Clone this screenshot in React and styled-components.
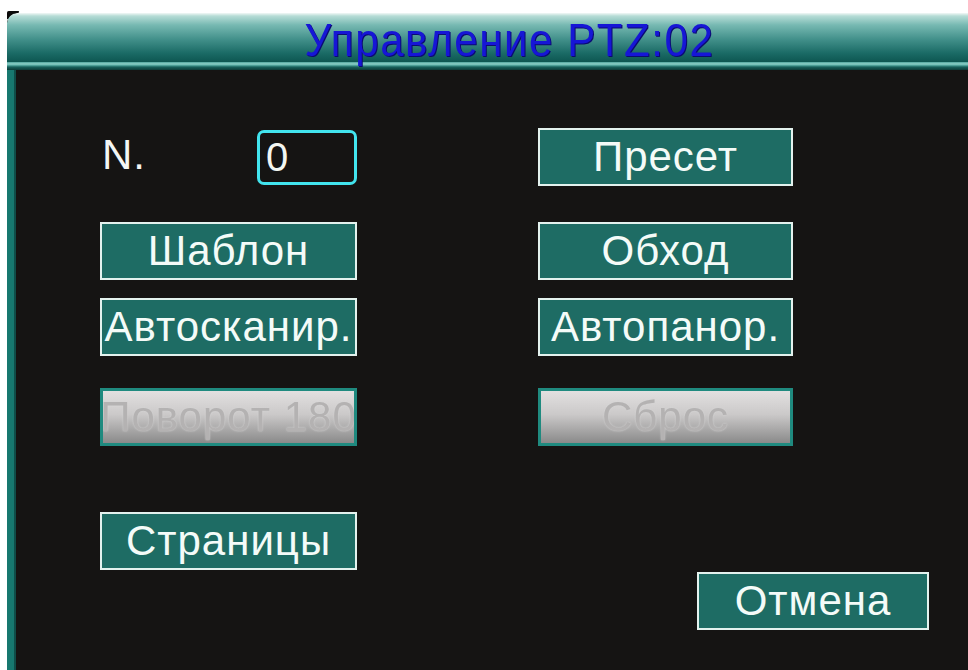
import React from 'react';
import styled, { createGlobalStyle } from 'styled-components';

const GlobalStyle = createGlobalStyle`
  html, body {
    margin: 0;
    background: #ffffff;
    font-family: "Liberation Sans", Arial, sans-serif;
  }
`;

// white page, window sits a little in from the corner
const Screen = styled.div`
  position: relative;
  padding: 13px 0 0 7px;
  height: 670px;
  box-sizing: border-box;
  overflow: hidden;
`;

// dark nick behind the rounded top-left corner
const CornerTip = styled.div`
  position: absolute;
  left: 7px;
  top: 11px;
  width: 12px;
  height: 8px;
  background: #0c0a0a;
  border-radius: 2px 0 10px 0;
`;

const Window = styled.div`
  position: relative;
  display: flex;
  flex-direction: column;
  height: 657px;
  background: #151413;
  border-top-left-radius: 10px;
  overflow: hidden;
`;

// teal glass title bar
const TitleBar = styled.div`
  height: 49px;
  display: flex;
  align-items: center;
  justify-content: center;
  background: linear-gradient(
    to bottom,
    #f2f8f6 0px,
    #b6dcd6 3px,
    #77b9b2 12px,
    #43918b 26px,
    #1b6b66 40px,
    #0d5651 49px
  );
  border-top-left-radius: 10px;
`;

const Title = styled.h1`
  margin: 6px 0 0 44px;
  font-size: 42px;
  font-weight: normal;
  letter-spacing: 1.6px;
  color: #1616d6;
  text-shadow: 1px 1px 0 #0b0b70;
  transform: scaleY(1.08);
`;

const TitleRule = styled.div`
  height: 8px;
  background: linear-gradient(
    to bottom,
    #4fa49d 0px,
    #8fd0c8 2px,
    #5fb4ab 3px,
    #17615c 5px,
    #0c3a37 8px
  );
`;

const Body = styled.div`
  flex: 1;
  display: flex;
  flex-direction: column;
  padding: 58px 39px 0 86px;
  border-left: 7px solid #17786f;
  box-shadow: inset 2px 0 0 #0f4e49;
  background: #151413;
`;

const Row = styled.div`
  display: flex;
  gap: 181px;
  margin-top: ${p => p.$gap || 0}px;
  justify-content: ${p => (p.$end ? 'flex-end' : 'flex-start')};
`;

const Cell = styled.div`
  width: ${p => p.$w || 257}px;
  display: flex;
  align-items: center;
  justify-content: space-between;
`;

const Label = styled.span`
  margin: -4px 0 0 2px;
  font-size: 42px;
  color: #f4f6f4;
  letter-spacing: 1px;
`;

const NumberBox = styled.div`
  width: 100px;
  height: 55px;
  box-sizing: border-box;
  border: 3px solid #42e4ee;
  border-radius: 7px;
  display: flex;
  align-items: center;
  padding-left: 6px;
  font-size: 40px;
  color: #f2f6f2;
`;

const Button = styled.div`
  width: ${p => p.$w || 257}px;
  height: 58px;
  box-sizing: border-box;
  display: flex;
  align-items: center;
  justify-content: center;
  overflow: hidden;
  white-space: nowrap;
  font-size: 42px;
  letter-spacing: 1px;
  ${p =>
    p.$off
      ? `
    border: 3px solid #1f8a7f;
    background: linear-gradient(to bottom, #e2e0e0 0%, #cbc9c9 45%, #8a8a8a 100%);
    color: #b4b2b2;
    text-shadow: 0 0 2px #d6d6d6;
    filter: blur(0.7px);
  `
      : `
    border: 2px solid #e3f2ee;
    background: #1e6c64;
    color: #f4fbf8;
  `}
`;

export default function App() {
  return (
    <>
      <GlobalStyle />
      <Screen>
        <CornerTip />
        <Window>
          <TitleBar>
            <Title>Управление PTZ:02</Title>
          </TitleBar>
          <TitleRule />
          <Body>
            <Row>
              <Cell>
                <Label>N.</Label>
                <NumberBox>0</NumberBox>
              </Cell>
              <Button $w={255}>Пресет</Button>
            </Row>
            <Row $gap={36}>
              <Button>Шаблон</Button>
              <Button $w={255}>Обход</Button>
            </Row>
            <Row $gap={18}>
              <Button>Автосканир.</Button>
              <Button $w={255}>Автопанор.</Button>
            </Row>
            <Row $gap={32}>
              <Button $off>Поворот 180</Button>
              <Button $off $w={255}>Сброс</Button>
            </Row>
            <Row $gap={66}>
              <Button>Страницы</Button>
            </Row>
            <Row $gap={2} $end>
              <Button $w={232}>Отмена</Button>
            </Row>
          </Body>
        </Window>
      </Screen>
    </>
  );
}
